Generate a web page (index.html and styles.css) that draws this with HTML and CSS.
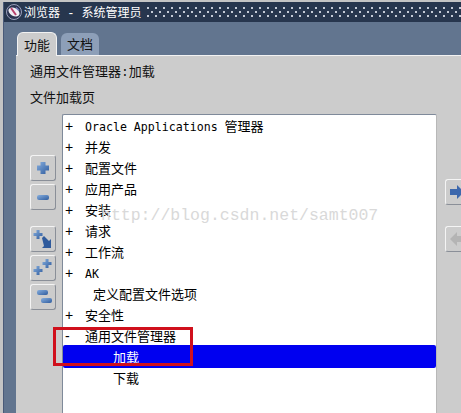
FILE: index.html
```html
<!DOCTYPE html>
<html lang="zh-CN">
<head>
  <meta charset="UTF-8">
  <title>浏览器 - 系统管理员</title>
  <link rel="stylesheet" href="styles.css">
</head>
<body>
  <div class="window">
    <!-- title bar -->
    <div class="titlebar">
      <svg class="app-icon" width="18" height="18" viewBox="0 0 18 18">
        <circle cx="9" cy="9" r="7.5" fill="#2b3350" stroke="#9aa0bb"/>
        <ellipse cx="9" cy="9" rx="6" ry="4" fill="#f1eef4" transform="rotate(30 9 9)"/>
        <path d="M6 5 L11 12" stroke="#b8406c" stroke-width="2"/>
        <path d="M11 4.5 L14 7.5" stroke="#7a80c0" stroke-width="1.5"/>
      </svg>
      <span class="title-text">浏览器 - 系统管理员</span>
      <div class="title-dots"></div>
    </div>

    <div class="tabs">
      <div class="tab tab-active">功能</div>
      <div class="tab">文档</div>
    </div>

    <div class="panel">
      <div class="page-title">通用文件管理器:加载</div>
      <div class="page-sub">文件加载页</div>

      <div class="work">
        <div class="side-buttons">
          <svg class="defs" width="0" height="0">
            <linearGradient id="blue" x1="0" y1="0" x2="1" y2="1">
              <stop offset="0" stop-color="#86aede"/>
              <stop offset="1" stop-color="#2f5c9e"/>
            </linearGradient>
          </svg>
          <div class="btn-group">
            <button class="btn">
              <svg width="24" height="24" viewBox="0 0 24 24"><path class="ico" d="M9.5 6h5v3.500H18v5h-3.500V18h-5v-3.500H6v-5h3.500z"/></svg>
            </button>
            <button class="btn">
              <svg width="24" height="24" viewBox="0 0 24 24"><rect class="ico" x="6" y="10" width="12" height="5" rx="2"/></svg>
            </button>
          </div>
          <div class="btn-group">
            <button class="btn">
              <svg width="24" height="24" viewBox="0 0 24 24">
                <path class="ico" d="M5.500 3h3v3h3v3h-3v3h-3V9h-3V6h3z"/>
                <path class="ico-dark" d="M11 11l2-2 5 5 2-2v9h-9l2-2z"/>
              </svg>
            </button>
            <button class="btn">
              <svg width="24" height="24" viewBox="0 0 24 24">
                <path class="ico" d="M5.500 10h3v3h3v3h-3v3h-3v-3h-3v-3h3z"/>
                <path class="ico" d="M14.500 3h3v3h3v3h-3v3h-3V9h-3V6h3z"/>
              </svg>
            </button>
            <button class="btn">
              <svg width="24" height="24" viewBox="0 0 24 24">
                <rect class="ico" x="6" y="5" width="11" height="5" rx="2"/>
                <rect class="ico" x="10" y="13" width="11" height="5" rx="2"/>
              </svg>
            </button>
          </div>
        </div>

        <div class="tree">
          <div class="row"><span class="mark">+</span><span class="label"><span class="latin">Oracle Applications </span>管理器</span></div>
          <div class="row"><span class="mark">+</span><span class="label">并发</span></div>
          <div class="row"><span class="mark">+</span><span class="label">配置文件</span></div>
          <div class="row"><span class="mark">+</span><span class="label">应用产品</span></div>
          <div class="row"><span class="mark">+</span><span class="label">安装</span></div>
          <div class="row"><span class="mark">+</span><span class="label">请求</span></div>
          <div class="row"><span class="mark">+</span><span class="label">工作流</span></div>
          <div class="row"><span class="mark">+</span><span class="label"><span class="latin">AK</span></span></div>
          <div class="row"><span class="mark"></span><span class="label child">定义配置文件选项</span></div>
          <div class="row"><span class="mark">+</span><span class="label">安全性</span></div>
          <div class="row"><span class="mark">-</span><span class="label">通用文件管理器</span></div>
          <div class="row row-selected"><span class="mark"></span><span class="label leaf">加载</span></div>
          <div class="row"><span class="mark"></span><span class="label leaf">下载</span></div>

          <div class="watermark">http://blog.csdn.net/samt007</div>
        </div>

        <div class="move-buttons">
          <button class="btn btn-move">
            <svg width="16" height="14" viewBox="0 0 16 14"><path fill="#3d68ad" d="M0 4h7V0l7 7-7 7v-4H0z"/></svg>
          </button>
          <button class="btn btn-move">
            <svg width="16" height="14" viewBox="0 0 16 14"><path fill="#b4b4b4" d="M0 7l7-7v4h7v6H7v4z"/></svg>
          </button>
        </div>
      </div>
    </div>

    <div class="callout"></div>
  </div>
</body>
</html>
```

FILE: styles.css
```css
html, body {
  margin: 0;
  height: 100%;
  overflow: hidden;
}
body {
  font-family: "Liberation Mono", "Noto Sans CJK SC", monospace;
  font-size: 12px;
  background-color: #c4c4c4;
}
.window {
  position: relative;
  height: 411px;
  margin-top: 2px;
  margin-left: 3px;
  display: flex;
  flex-direction: column;
  border-left: 1px solid #4a5a78;
  background-color: #62758f;
}

/* title bar */
.titlebar {
  height: 20px;
  display: flex;
  align-items: center;
  background-color: #27364e;
  color: #fff;
}
.app-icon {
  margin-left: 1px;
  flex: none;
}
.title-text {
  margin-left: 1px;
  font-family: "Liberation Mono", "Noto Sans CJK SC", monospace;
  font-size: 12px;
  white-space: pre;
  width: 123px;
  flex: none;
}
.title-dots {
  flex: 1;
  height: 12px;
  background-image:
    radial-gradient(circle at 1px 1px, #c4cad6 1px, transparent 1.2px),
    radial-gradient(circle at 1px 1px, #c4cad6 1px, transparent 1.2px);
  background-size: 8px 8px, 8px 8px;
  background-position: 0 1px, 4px 5px;
}

/* tabs */
.tabs {
  height: 33px;
  display: flex;
  align-items: flex-end;
  gap: 4px;
  padding-left: 13px;
  flex: none;
}
.tab {
  width: 38px;
  height: 22px;
  line-height: 22px;
  text-align: center;
  font-family: "Noto Sans CJK SC", sans-serif;
  font-size: 13px;
  color: #111;
  background-color: #8d9fb8;
  border-radius: 6px 6px 0 0;
}
.tab-active {
  width: 38px;
  height: 23px;
  line-height: 24px;
  background-color: #cccccc;
  border: 1px solid #f2f2f2;
  border-bottom: none;
  margin-bottom: -1px;
  position: relative;
  z-index: 1;
}

/* panel */
.panel {
  flex: 1;
  margin-left: 12px;
  padding: 8px 0 0 14px;
  background-color: #cccccc;
  border-top: 1px solid #f2f2f2;
  overflow: hidden;
  color: #111;
}
.page-title, .page-sub {
  font-family: "Liberation Mono", "Noto Sans CJK SC", monospace;
  font-size: 13px;
  line-height: 18px;
}
.page-sub {
  margin-top: 8px;
}
.work {
  margin-top: 6px;
  display: flex;
  align-items: flex-start;
}

/* buttons */
.side-buttons {
  width: 32px;
  padding-top: 41px;
  flex: none;
  display: flex;
  flex-direction: column;
  gap: 16px;
}
.defs {
  position: absolute;
}
.btn-group {
  display: flex;
  flex-direction: column;
  gap: 3px;
}
.btn {
  width: 26px;
  height: 26px;
  padding: 0;
  display: flex;
  align-items: center;
  justify-content: center;
  background-color: #cccccc;
  border: 1px solid;
  border-color: #f4f4f4 #8a8f98 #8a8f98 #f4f4f4;
  border-radius: 3px;
}
.ico { fill: url(#blue); }
.ico-dark { fill: #2f5a9c; }

/* tree */
.tree {
  position: relative;
  width: 373px;
  height: 320px;
  flex: none;
  background-color: #fff;
  border: 1px solid #7f8a9a;
  border-right-color: #b8b8b8;
  border-radius: 2px 2px 0 0;
  padding-top: 0.5px;
  color: #000;
}
.row {
  height: 21px;
  line-height: 21px;
  display: flex;
  white-space: pre;
  font-family: "DejaVu Sans Mono", "Noto Sans CJK SC", monospace;
}
.label {
  font-size: 13px;
}
.latin {
  font-size: 11.6px;
}
.mark {
  width: 22px;
  padding-left: 2px;
  box-sizing: border-box;
  font-family: "Liberation Sans", sans-serif;
  font-size: 14px;
}
.child { padding-left: 8px; }
.leaf { padding-left: 28px; }
.row-selected {
  background-color: #0000f0;
  color: #fff;
  border-radius: 2px;
  height: 23px;
  line-height: 26px;
  margin-top: -2px;
}
.watermark {
  position: absolute;
  left: 38px;
  top: 91px;
  font-family: "Liberation Mono", monospace;
  font-size: 16.5px;
  color: #d9d9d9;
  white-space: pre;
  pointer-events: none;
}
.move-buttons {
  padding-top: 65px;
  padding-left: 8px;
  display: flex;
  flex-direction: column;
  gap: 21px;
  flex: none;
}
.btn-move {
  justify-content: flex-start;
  padding-left: 4px;
}

/* red box drawn over the screenshot */
.callout {
  position: absolute;
  left: 49px;
  top: 325px;
  width: 134px;
  height: 33px;
  border: 3px solid #d0101c;
  pointer-events: none;
}
```
